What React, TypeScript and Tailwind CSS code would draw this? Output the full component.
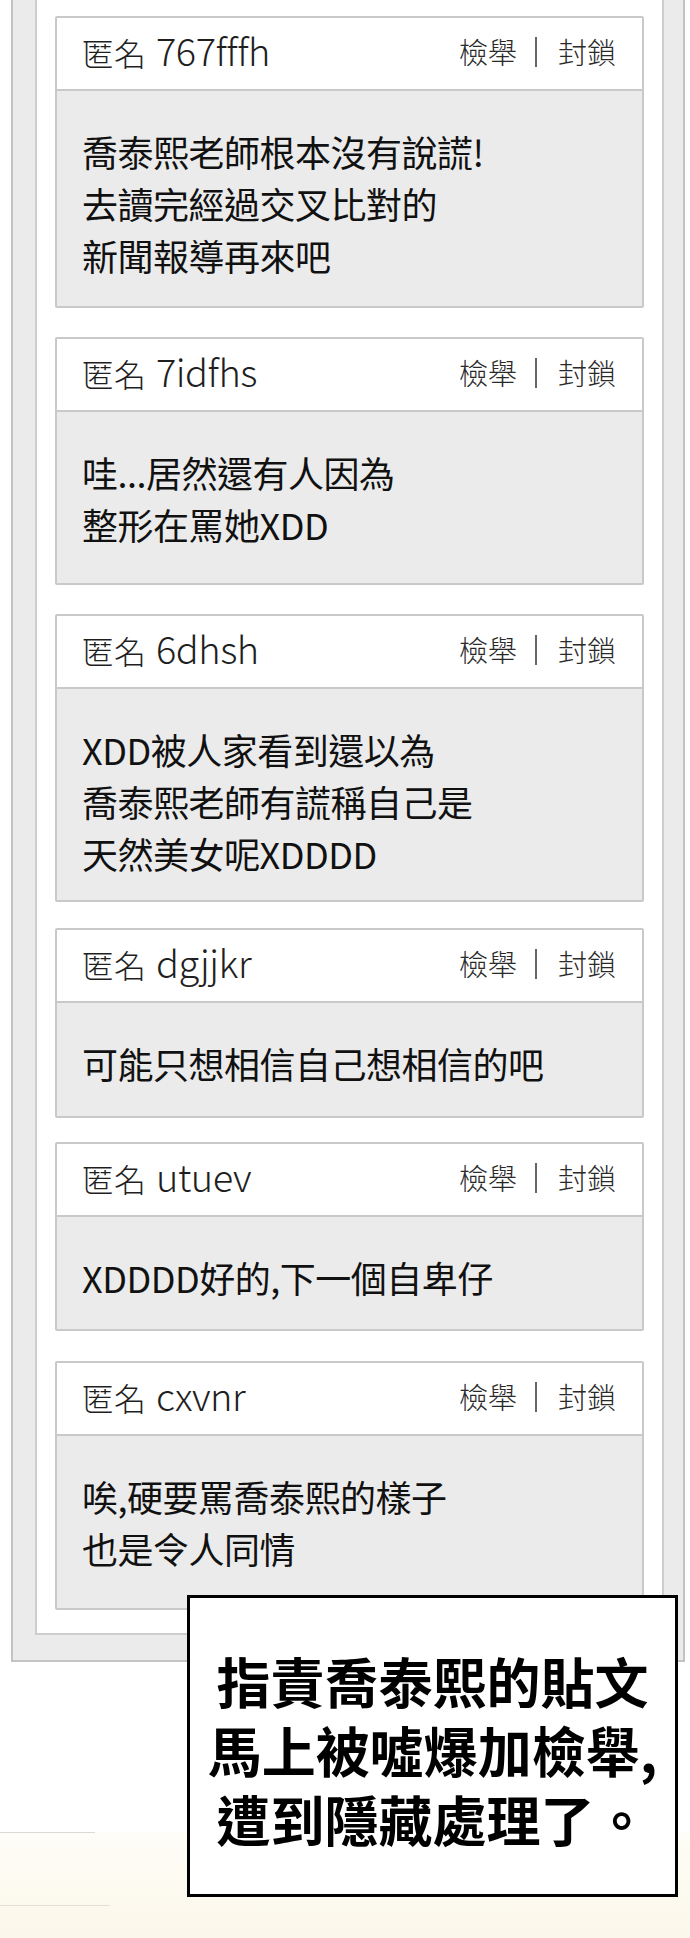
const comments = [
  {
    name: "767fffh",
    lines: ["喬泰熙老師根本沒有說謊!", "去讀完經過交叉比對的", "新聞報導再來吧"],
    gap: "mt-0",
    body: "h-[215px]",
  },
  {
    name: "7idfhs",
    lines: ["哇...居然還有人因為", "整形在罵她XDD"],
    gap: "mt-[29px]",
    body: "h-[171px]",
  },
  {
    name: "6dhsh",
    lines: ["XDD被人家看到還以為", "喬泰熙老師有謊稱自己是", "天然美女呢XDDDD"],
    gap: "mt-[29px]",
    body: "h-[211px]",
  },
  {
    name: "dgjjkr",
    lines: ["可能只想相信自己想相信的吧"],
    gap: "mt-[26px]",
    body: "h-[113px]",
  },
  {
    name: "utuev",
    lines: ["XDDDD好的,下一個自卑仔"],
    gap: "mt-[24px]",
    body: "h-[112px]",
  },
  {
    name: "cxvnr",
    lines: ["唉,硬要罵喬泰熙的樣子", "也是令人同情"],
    gap: "mt-[30px]",
    body: "h-[172px]",
  },
];

const CommentCard = ({ c }: { c: (typeof comments)[number] }) => (
  <div className={`${c.gap} border-2 border-[#c9c9c9] rounded-[2px] overflow-hidden`}>
    {/* header */}
    <div className="h-[73px] bg-white border-b-2 border-[#c9c9c9] flex items-center justify-between pl-[25px] pr-[26px] pb-[4px]">
      <span className="flex items-baseline font-light text-[#1f1f1f]">
        <span className="text-[32px]">匿名</span>
        <span className="ml-[10px] text-[38px] font-extralight tracking-[-0.5px] leading-none">{c.name}</span>
      </span>
      <span className="flex items-center text-[29px] font-light text-[#2a2a2a]">
        <span>檢舉</span>
        <span className="ml-[18px] mr-[21px] w-[2px] h-[30px] bg-[#666]" />
        <span>封鎖</span>
      </span>
    </div>
    {/* body */}
    <div className={`${c.body} bg-[#ebebeb] pl-[25px] pt-[34px] text-[36px] leading-[52px] text-[#111] tracking-[-0.5px]`}>
      {c.lines.map((l) => (
        <div key={l} className="whitespace-nowrap">
          {l}
        </div>
      ))}
    </div>
  </div>
);

export default function App() {
  return (
    <div className="relative w-[690px] h-[1938px] bg-white overflow-hidden font-['Noto_Sans_CJK_TC',sans-serif]">
      {/* outer frame */}
      <div className="ml-[11px] w-[674px] border-x-2 border-b-2 border-[#c3c3c3] bg-[#ebebeb] pl-[22px] pr-[19px] pb-[25px]">
        <div className="border-x-2 border-b-2 border-[#cdcdcd] bg-white px-[18px] pt-[16px] pb-[23px]">
          {comments.map((c) => (
            <CommentCard key={c.name} c={c} />
          ))}
        </div>
      </div>

      {/* faint cream floor */}
      <div className="mt-[170px] h-[106px] bg-gradient-to-b from-[#fefdf7] to-[#fbf7ea]">
        <div className="w-[95px] h-px bg-[#dcdad3]" />
        <div className="mt-[72px] w-[110px] h-px bg-[#e2e0d8]" />
      </div>

      {/* caption box */}
      <div className="absolute left-[187px] top-[1595px] w-[491px] h-[302px] border-[3px] border-black bg-white flex flex-col items-center pt-[48px] text-[54px] leading-[69px] font-bold text-black">
        <div className="whitespace-nowrap">指責喬泰熙的貼文</div>
        <div className="whitespace-nowrap">馬上被噓爆加檢舉,</div>
        <div className="whitespace-nowrap">遭到隱藏處理了。</div>
      </div>
    </div>
  );
}
